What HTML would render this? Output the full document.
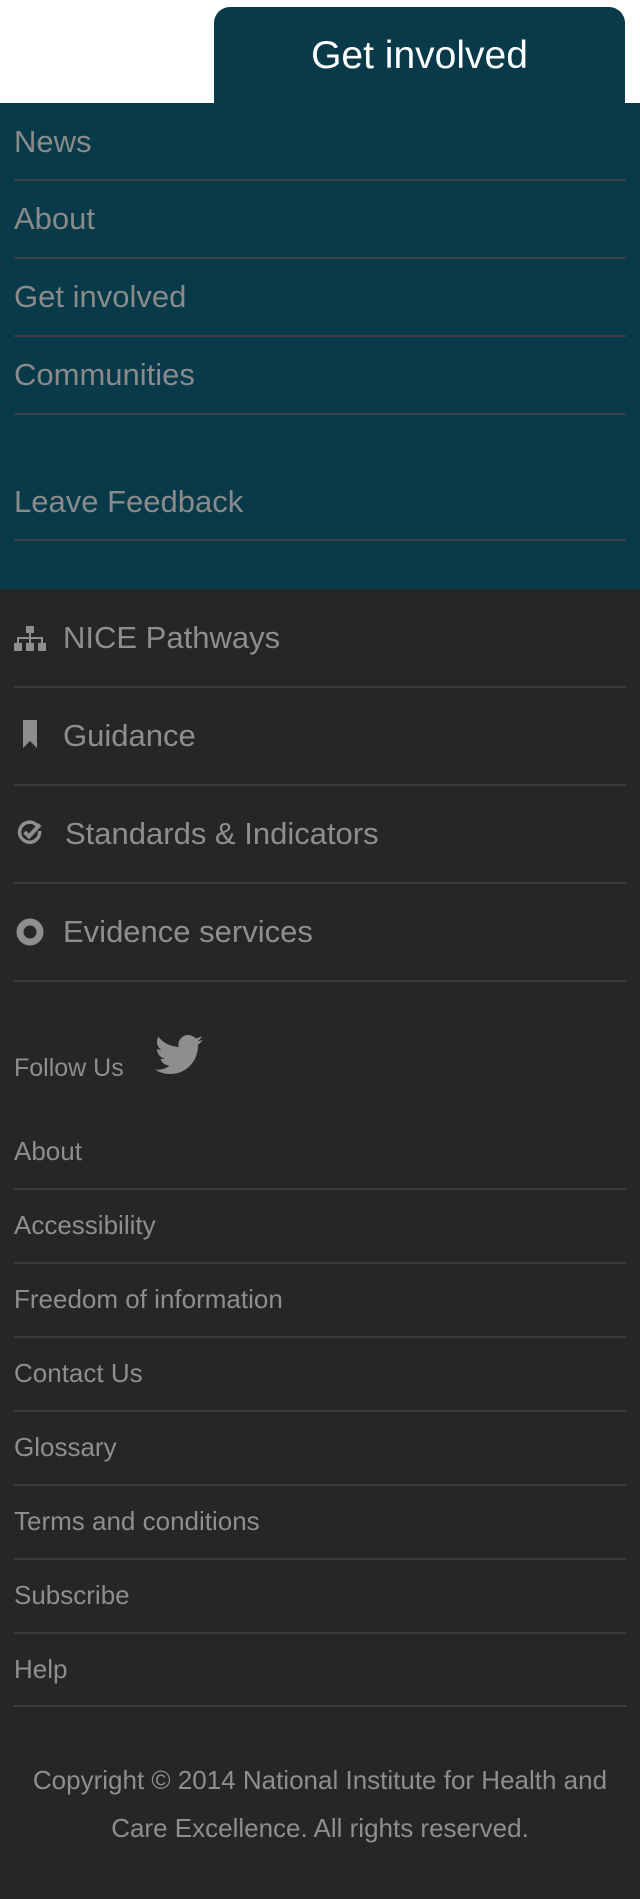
<!DOCTYPE html>
<html><head><meta charset="utf-8"><style>
*{margin:0;padding:0;box-sizing:border-box}
body{width:640px;height:1899px;background:#262626;font-family:"Liberation Sans",sans-serif;position:relative;overflow:hidden}
.top{position:absolute;left:0;top:0;width:640px;height:103px;background:#fff}
.tab{position:absolute;left:214px;top:7px;width:411px;height:100px;background:#083a4a;border-radius:16px 16px 0 0;color:#fff;font-size:39px;text-align:center;line-height:98px}
.teal{position:absolute;left:0;top:103px;width:640px;height:486px;background:#083a4a}
.t{position:absolute;left:14px;color:#8a8a8a;font-size:31px;line-height:40px;transform:translateY(-50%)}
.s{position:absolute;left:14px;width:612px;height:2px;background:#3b3b3b}
.d{position:absolute;left:63px;color:#8e8e8e;font-size:31px;line-height:40px;transform:translateY(-50%)}
.f{position:absolute;left:14px;color:#8e8e8e;font-size:26px;line-height:34px;transform:translateY(-50%)}
.ic{position:absolute}
.copy{position:absolute;left:0;width:640px;top:1756px;text-align:center;color:#8e8e8e;font-size:26px;line-height:48px}
</style></head><body>
<div class="top"></div>
<div class="tab">Get involved</div>
<div class="teal"></div>
<div class="t" style="top:142px">News</div>
<div class="s" style="top:179px;background:#3e3f3f"></div>
<div class="t" style="top:219px">About</div>
<div class="s" style="top:257px;background:#3e3f3f"></div>
<div class="t" style="top:297px">Get involved</div>
<div class="s" style="top:335px;background:#3e3f3f"></div>
<div class="t" style="top:375px">Communities</div>
<div class="s" style="top:413px;background:#3e3f3f"></div>
<div class="t" style="top:502px">Leave Feedback</div>
<div class="s" style="top:539px;background:#3e3f3f"></div>

<svg class="ic" style="left:14px;top:626px" width="32" height="26" viewBox="0 0 32 26" fill="#8e8e8e">
<rect x="12" y="0" width="8" height="7"/><rect x="15" y="7" width="2" height="5"/><rect x="3" y="11" width="26" height="2"/><rect x="3" y="11" width="2" height="6"/><rect x="27" y="11" width="2" height="6"/><rect x="15" y="11" width="2" height="6"/>
<rect x="0" y="17" width="8" height="8"/><rect x="12" y="17" width="8" height="8"/><rect x="24" y="17" width="8" height="8"/></svg>
<div class="d" style="top:638px">NICE Pathways</div>
<div class="s" style="top:686px"></div>
<svg class="ic" style="left:22px;top:720px" width="16" height="28" viewBox="0 0 16 28" fill="#8e8e8e"><path d="M1 0H15V28L8 21L1 28Z"/></svg>
<div class="d" style="top:736px">Guidance</div>
<div class="s" style="top:784px"></div>
<svg class="ic" style="left:17px;top:820px" width="28" height="26" viewBox="0 0 28 26" fill="none" stroke="#8e8e8e" stroke-width="3.5"><path d="M20 5.5A10 10 0 1 0 22.5 11"/><path d="M7.5 12L12 16.5L23 4.5" stroke-width="4"/></svg>
<div class="d" style="top:834px;left:65px">Standards &amp; Indicators</div>
<div class="s" style="top:882px"></div>
<svg class="ic" style="left:16px;top:918px" width="28" height="28" viewBox="0 0 28 28"><circle cx="14" cy="14" r="10" fill="none" stroke="#8e8e8e" stroke-width="7"/></svg>
<div class="d" style="top:932px">Evidence services</div>
<div class="s" style="top:980px"></div>

<div class="f" style="top:1068px;font-size:25px">Follow Us</div>
<svg class="ic" style="left:155px;top:1034px" width="48" height="42" viewBox="0 0 24 20" fill="#8e8e8e"><path d="M24 2.4c-.9.4-1.8.6-2.8.8 1-.6 1.8-1.6 2.2-2.7-1 .6-2 1-3.1 1.2C19.4.7 18.1 0 16.6 0c-2.7 0-4.9 2.2-4.9 4.9 0 .4 0 .8.1 1.1C7.700 5.8 4.1 3.9 1.7.9c-.4.7-.7 1.6-.7 2.500 0 1.7.9 3.2 2.2 4.1-.8 0-1.6-.2-2.2-.6v.1c0 2.4 1.7 4.4 3.900 4.8-.4.1-.8.2-1.3.2-.3 0-.6 0-.9-.1.6 2 2.4 3.4 4.6 3.4-1.7 1.3-3.8 2.1-6.100 2.1-.4 0-.8 0-1.2-.1 2.2 1.4 4.8 2.2 7.500 2.2 9.100 0 14-7.500 14-14v-.6c1-.7 1.8-1.600 2.500-2.500z"/></svg>

<div class="f" style="top:1151px">About</div><div class="s" style="top:1188px"></div>
<div class="f" style="top:1225px">Accessibility</div><div class="s" style="top:1262px"></div>
<div class="f" style="top:1299px">Freedom of information</div><div class="s" style="top:1336px"></div>
<div class="f" style="top:1373px">Contact Us</div><div class="s" style="top:1410px"></div>
<div class="f" style="top:1447px">Glossary</div><div class="s" style="top:1484px"></div>
<div class="f" style="top:1521px">Terms and conditions</div><div class="s" style="top:1558px"></div>
<div class="f" style="top:1595px">Subscribe</div><div class="s" style="top:1632px"></div>
<div class="f" style="top:1669px">Help</div><div class="s" style="top:1705px"></div>

<div class="copy">Copyright © 2014 National Institute for Health and<br>Care Excellence. All rights reserved.</div>
</body></html>
